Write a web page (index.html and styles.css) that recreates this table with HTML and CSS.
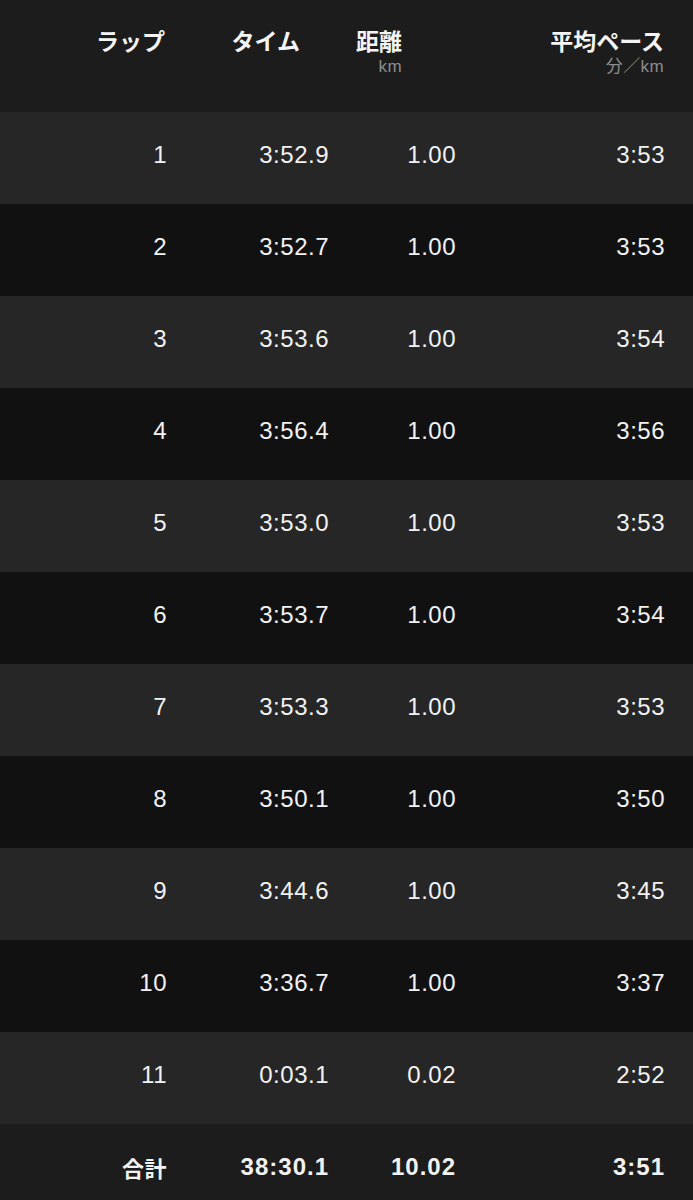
FILE: index.html
```html
<!DOCTYPE html>
<html lang="ja">
<head>
<meta charset="utf-8">
<link rel="stylesheet" href="styles.css">
</head>
<body>
<div class="table">
  <div class="head">
    <div class="hcell c-lap"><span class="ttl">ラップ</span></div>
    <div class="hcell c-time"><span class="ttl">タイム</span></div>
    <div class="hcell c-dist"><span class="ttl">距離</span><span class="unit">km</span></div>
    <div class="hcell c-pace"><span class="ttl">平均ペース</span><span class="unit">分／km</span></div>
  </div>
  <div class="row odd"><div class="cell">1</div><div class="cell">3:52.9</div><div class="cell">1.00</div><div class="cell">3:53</div></div>
  <div class="row even"><div class="cell">2</div><div class="cell">3:52.7</div><div class="cell">1.00</div><div class="cell">3:53</div></div>
  <div class="row odd"><div class="cell">3</div><div class="cell">3:53.6</div><div class="cell">1.00</div><div class="cell">3:54</div></div>
  <div class="row even"><div class="cell">4</div><div class="cell">3:56.4</div><div class="cell">1.00</div><div class="cell">3:56</div></div>
  <div class="row odd"><div class="cell">5</div><div class="cell">3:53.0</div><div class="cell">1.00</div><div class="cell">3:53</div></div>
  <div class="row even"><div class="cell">6</div><div class="cell">3:53.7</div><div class="cell">1.00</div><div class="cell">3:54</div></div>
  <div class="row odd"><div class="cell">7</div><div class="cell">3:53.3</div><div class="cell">1.00</div><div class="cell">3:53</div></div>
  <div class="row even"><div class="cell">8</div><div class="cell">3:50.1</div><div class="cell">1.00</div><div class="cell">3:50</div></div>
  <div class="row odd"><div class="cell">9</div><div class="cell">3:44.6</div><div class="cell">1.00</div><div class="cell">3:45</div></div>
  <div class="row even"><div class="cell">10</div><div class="cell">3:36.7</div><div class="cell">1.00</div><div class="cell">3:37</div></div>
  <div class="row odd"><div class="cell">11</div><div class="cell">0:03.1</div><div class="cell">0.02</div><div class="cell">2:52</div></div>
  <div class="row total"><div class="cell jp">合計</div><div class="cell">38:30.1</div><div class="cell">10.02</div><div class="cell">3:51</div></div>
</div>
</body>
</html>
```

FILE: styles.css
```css
html, body {
  margin: 0;
  padding: 0;
  background: #1c1c1c;
}
body {
  font-family: "Liberation Sans", "Noto Sans CJK JP", sans-serif;
  color: #f2f2f2;
  width: 693px;
  overflow: hidden;
}
.table {
  display: flex;
  flex-direction: column;
}
.head,
.row {
  display: grid;
  grid-template-columns: 167px 162px 127px 209px;
  padding-right: 28px;
}
.head {
  height: 112px;
  background: #1c1c1c;
  align-items: start;
}
.hcell {
  display: flex;
  flex-direction: column;
  align-items: flex-end;
  padding-top: 24px;
}
.hcell.c-lap { padding-right: 2px; }
.hcell.c-time { padding-right: 29px; }
.hcell.c-dist { padding-right: 54px; }
.hcell.c-pace { padding-right: 1px; }
.ttl {
  font-family: "Noto Sans CJK JP", sans-serif;
  font-weight: 700;
  font-size: 23px;
  line-height: 32px;
  color: #f4f4f4;
}
.unit {
  font-family: "Liberation Sans", "Noto Sans CJK JP", sans-serif;
  font-size: 17px;
  line-height: 18px;
  margin-top: 2px;
  color: #8c8c8c;
  letter-spacing: 0.4px;
}
.row {
  height: 92px;
  align-items: center;
}
.row.odd { background: #262626; }
.row.even { background: #111111; }
.row.total { background: #1c1c1c; }
.cell {
  text-align: right;
  font-size: 24px;
  line-height: 28px;
  letter-spacing: 0.5px;
  padding-bottom: 6px;
}
.row.total .cell {
  font-weight: 700;
  font-size: 24px;
  letter-spacing: 1px;
}
.row.total .cell.jp {
  font-family: "Noto Sans CJK JP", sans-serif;
  font-size: 22px;
  letter-spacing: 0.5px;
}
```
